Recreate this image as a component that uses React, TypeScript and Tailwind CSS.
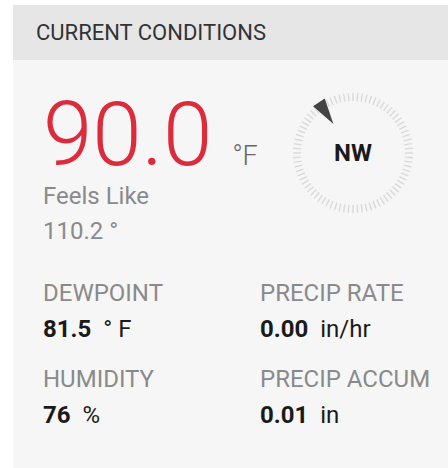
const ticks = Array.from({ length: 80 }, (_, i) => (i * 360) / 80);

const Compass = ({ dir, angle }: { dir: string; angle: number }): JSX.Element => {
  return (
    <div className="relative w-[124px] h-[124px]">
      <svg width="124" height="124" viewBox="-62 -62 124 124" className="absolute inset-0">
        {ticks.map((a) => (
          <line
            key={a}
            x1="0"
            y1="-52"
            x2="0"
            y2="-60"
            stroke="#d9d9d9"
            strokeWidth="1.4"
            transform={`rotate(${a})`}
          />
        ))}
        <polygon points="-7,-61 7,-61 0,-35" fill="#444444" transform={`rotate(${angle})`} />
      </svg>
      <div className="absolute inset-0 flex items-center justify-center">
        <span className="text-[24px] font-bold text-[#1a1a1a] leading-none">{dir}</span>
      </div>
    </div>
  );
};

const Stat = ({ label, value, unit }: { label: string; value: string; unit: string }): JSX.Element => (
  <div className="whitespace-nowrap">
    <div className="text-[24px] leading-[28px] text-[#8a8a8a] uppercase">{label}</div>
    <div className="mt-[8px] flex items-baseline text-[24px] leading-[28px] text-[#1a1a1a]">
      <span className="font-bold">{value}</span>
      <span className="ml-[12px]">{unit}</span>
    </div>
  </div>
);

export default function App(): JSX.Element {
  return (
    <div className="w-full h-[468px] bg-white pt-[5px] pl-[13px] overflow-hidden" style={{ fontFamily: "Roboto, 'Liberation Sans', sans-serif" }}>
      <div className="h-full flex flex-col">
        <div className="h-[55px] shrink-0 bg-[#e6e6e6] flex items-center px-[23px]">
          <h2 className="text-[22px] text-[#333333] font-normal">CURRENT CONDITIONS</h2>
        </div>
        <div className="flex-1 bg-[#f6f6f6] pl-[30px]">
          <div className="flex pt-[38px]">
            <div className="w-[248px]">
              <div className="flex items-baseline">
                <span className="text-[89px] leading-[74px] font-light text-[#dc2b3a]">90.0</span>
                <span className="ml-[20px] text-[27px] leading-[30px] font-light text-[#666666]">°F</span>
              </div>
              <div className="mt-[10px] text-[24px] leading-[28px] text-[#8a8a8a]">Feels Like</div>
              <div className="mt-[7px] text-[24px] leading-[28px] text-[#8a8a8a]">110.2 °</div>
            </div>
            <div className="-mt-[7px]">
              <Compass dir="NW" angle={-34} />
            </div>
          </div>
          <div className="mt-[34px] grid grid-cols-[217px_1fr] gap-y-[22px]">
            <Stat label="Dewpoint" value="81.5" unit="° F" />
            <Stat label="Precip Rate" value="0.00" unit="in/hr" />
            <Stat label="Humidity" value="76" unit="%" />
            <Stat label="Precip Accum" value="0.01" unit="in" />
          </div>
        </div>
      </div>
    </div>
  );
}
